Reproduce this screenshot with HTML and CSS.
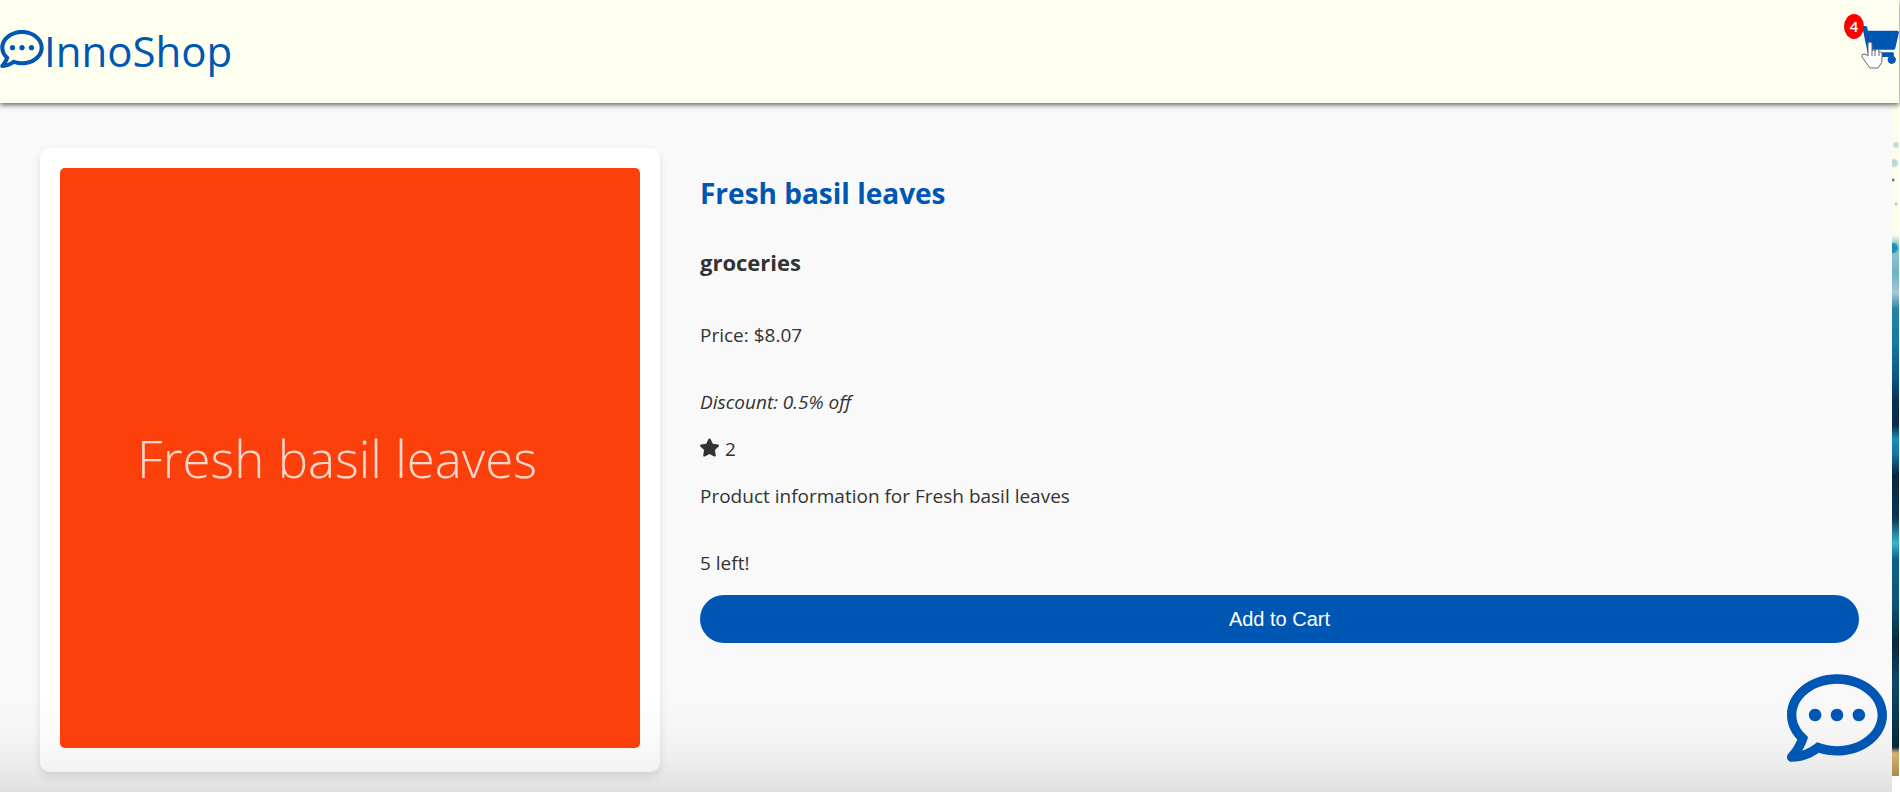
FILE: index.html
```html
<!DOCTYPE html>
<html lang="en">
<head>
    <meta charset="UTF-8">
    <meta name="viewport" content="width=device-width, initial-scale=1.0">
    <title>InnoShop</title>
    <link rel="stylesheet" href="styles.css">
</head>
<body>
    <header class="header">
        <a href="#" class="logo">
            <svg class="logo-icon" viewBox="0 32 512 448" aria-hidden="true">
                <path d="M144 208c-17.700 0-32 14.300-32 32s14.300 32 32 32 32-14.300 32-32-14.300-32-32-32zm112 0c-17.700 0-32 14.300-32 32s14.300 32 32 32 32-14.300 32-32-14.300-32-32-32zm112 0c-17.700 0-32 14.300-32 32s14.300 32 32 32 32-14.300 32-32-14.300-32-32-32zM256 32C114.600 32 0 125.100 0 240c0 47.600 19.900 91.200 52.900 126.300C38 405.700 7 439.100 6.500 439.500c-6.600 7-8.400 17.200-4.600 26S14.400 480 24 480c61.500 0 110-25.700 139.100-46.300C192 442.800 223.200 448 256 448c141.400 0 256-93.100 256-208S397.400 32 256 32zm0 368c-26.700 0-53.100-4.100-78.400-12.100l-22.700-7.200-19.500 13.800c-14.300 10.100-33.900 21.400-57.500 29 7.300-12.100 14.400-25.700 19.900-40.200l10.600-28.100-20.600-21.800C69.700 314.100 48 282.200 48 240c0-88.200 93.300-160 208-160s208 71.800 208 160-93.300 160-208 160z"/>
            </svg>
            <span>InnoShop</span>
        </a>
        <a href="#" class="cart" aria-label="Cart, 4 items">
            <svg class="cart-icon" viewBox="0 0 576 512" aria-hidden="true">
                <path d="M528.120 301.319l47.273-208C578.806 78.301 567.391 64 551.990 64H159.208l-9.166-44.810C147.758 8.021 137.930 0 126.529 0H24C10.745 0 0 10.745 0 24v16c0 13.255 10.745 24 24 24h69.883l70.248 343.435C147.325 417.100 136 435.222 136 456c0 30.928 25.072 56 56 56s56-25.072 56-56c0-15.674-6.447-29.835-16.824-40h209.647C430.447 426.165 424 440.326 424 456c0 30.928 25.072 56 56 56s56-25.072 56-56c0-22.172-12.888-41.332-31.579-50.405l5.517-24.276c3.413-15.018-8.002-29.319-23.403-29.319H218.117l-6.545-32h293.145c11.206 0 20.920-7.754 23.403-18.681z"/>
            </svg>
            <span class="cart-count">4</span>
            <svg class="pointer" viewBox="0 0 22 28" aria-hidden="true">
                <path d="M7 15V3a2 2 0 0 1 4 0v7a2 2 0 0 1 3 0 2 2 0 0 1 4 1 2 2 0 0 1 3 2v6q0 3-2 5l-2 3H9l-3-4-5-7q-1-3 2-3 2 0 4 2z"/>
                <path d="M11 10v5M14 10v5M18 11v4"/>
            </svg>
        </a>
    </header>

    <div class="page">
        <main class="product">
            <div class="product-card">
                <div class="product-image">Fresh basil leaves</div>
            </div>
            <div class="product-details">
                <h1>Fresh basil leaves</h1>
                <h2>groceries</h2>
                <p>Price: $8.07</p>
                <p class="discount">Discount: 0.5% off</p>
                <div class="rating">
                    <svg class="star" viewBox="20 0 536 512" aria-hidden="true">
                        <path d="M259.300 17.800L194 150.200 47.900 171.500c-26.200 3.800-36.700 36.100-17.700 54.600l105.700 103-25 145.500c-4.500 26.300 23.200 46 46.400 33.700L288 439.600l130.700 68.700c23.200 12.200 50.900-7.400 46.400-33.700l-25-145.500 105.700-103c19-18.500 8.500-50.800-17.700-54.600L382 150.200 316.700 17.800c-11.700-23.600-45.600-23.900-57.400 0z"/>
                    </svg>
                    <span>2</span>
                </div>
                <p>Product information for Fresh basil leaves</p>
                <p class="stock">5 left!</p>
                <button type="button" class="add-to-cart">Add to Cart</button>
            </div>
        </main>
        <div class="backdrop"></div>
    </div>

    <button type="button" class="chat" aria-label="Open chat">
        <svg viewBox="0 32 512 448" aria-hidden="true">
            <path d="M144 208c-17.700 0-32 14.300-32 32s14.300 32 32 32 32-14.300 32-32-14.300-32-32-32zm112 0c-17.700 0-32 14.300-32 32s14.300 32 32 32 32-14.300 32-32-14.300-32-32-32zm112 0c-17.700 0-32 14.300-32 32s14.300 32 32 32 32-14.300 32-32-14.300-32-32-32zM256 32C114.600 32 0 125.100 0 240c0 47.600 19.900 91.200 52.900 126.300C38 405.700 7 439.100 6.500 439.500c-6.600 7-8.400 17.200-4.600 26S14.400 480 24 480c61.500 0 110-25.700 139.100-46.300C192 442.800 223.200 448 256 448c141.400 0 256-93.100 256-208S397.400 32 256 32zm0 368c-26.700 0-53.100-4.100-78.400-12.100l-22.700-7.200-19.500 13.800c-14.300 10.100-33.900 21.400-57.500 29 7.300-12.100 14.400-25.700 19.900-40.200l10.600-28.100-20.600-21.800C69.700 314.100 48 282.200 48 240c0-88.200 93.300-160 208-160s208 71.800 208 160-93.300 160-208 160z"/>
        </svg>
    </button>
</body>
</html>
```
FILE: styles.css
```css
* {
    box-sizing: border-box;
}
body {
    font-family: "Segoe UI", "Open Sans", "Noto Sans", sans-serif;
    margin: 0;
    min-height: 100vh;
    display: flex;
    flex-direction: column;
    background-color: #fff;
    color: #333;
}
.header {
    position: relative;
    z-index: 1;
    display: flex;
    justify-content: space-between;
    align-items: center;
    height: 103px;
    margin-right: 1px;
    background-color: #fffff0;
    box-shadow: 0 2px 5px rgba(0, 0, 0, 0.6);
}
.logo {
    display: flex;
    align-items: center;
    margin-bottom: 2px;
    color: #0056b3;
    font-size: 42px;
    text-decoration: none;
}
.logo-icon {
    width: 44px;
    height: 38px;
    margin-bottom: 4px;
    fill: #0056b3;
}
.cart {
    position: relative;
    display: flex;
    margin-bottom: 13px;
}
.cart-icon {
    width: 43px;
    height: 38px;
    fill: #0056b3;
}
.cart-count {
    position: absolute;
    top: -12px;
    left: -12px;
    width: 20px;
    height: 25px;
    border-radius: 50%;
    background-color: #f00;
    color: #fff;
    font-size: 15px;
    font-weight: 600;
    line-height: 25px;
    text-align: center;
}
.pointer {
    position: absolute;
    top: 15px;
    left: 5px;
    width: 22px;
    height: 28px;
    fill: #fff;
    stroke: #667;
    stroke-width: 1;
    overflow: visible;
}
.page {
    flex: 1;
    display: flex;
}
.product {
    flex: 1;
    display: grid;
    grid-template-columns: 620px 1fr;
    align-items: start;
    gap: 40px;
    padding: 45px 33px 20px 40px;
    background: linear-gradient(to top, #e0e0e0, #ededed 30px, #f6f6f6 65px, #f9f9f9 100px);
}
.product-card {
    padding: 20px 20px 24px;
    border-radius: 10px;
    background: linear-gradient(to top, #f2f2f2, #fbfbfb 35px, #fff 80px);
    box-shadow: 0 4px 10px rgba(0, 0, 0, 0.1);
}
.product-image {
    display: flex;
    align-items: center;
    justify-content: center;
    aspect-ratio: 1;
    padding-right: 26px;
    border-radius: 5px;
    background-color: #fc400b;
    color: #ffd8cc;
    font-family: "Open Sans", sans-serif;
    font-size: 51px;
    font-weight: 300;
}
.product-details {
    display: flex;
    flex-direction: column;
    padding-top: 25px;
    font-size: 19px;
    line-height: 27px;
}
h1 {
    margin: 0 0 34px;
    color: #0056b3;
    font-size: 28px;
    line-height: 40px;
}
h2 {
    margin: 0 0 45px;
    font-size: 22px;
    line-height: 30px;
}
p {
    margin: 0 0 40px;
}
.discount {
    margin-bottom: 20px;
    font-style: italic;
}
.rating {
    display: flex;
    align-items: center;
    gap: 6px;
    margin-bottom: 20px;
}
.star {
    width: 19px;
    height: 19px;
    margin-bottom: 4px;
    fill: #333;
}
.stock {
    margin-bottom: 18px;
}
.add-to-cart {
    height: 48px;
    border: none;
    border-radius: 24px;
    background-color: #0056b3;
    color: #fff;
    font-family: Arial, "Liberation Sans", sans-serif;
    font-size: 20px;
    cursor: pointer;
}
.add-to-cart:hover {
    background-color: #004494;
}
/* strip of the page's artwork behind the product panel */
.backdrop {
    width: 7px;
    margin: 0 1px 16px 0;
    background:
        radial-gradient(circle at 2px 60px, #b9dbd6 3px, transparent 5px),
        radial-gradient(circle at 4px 42px, #c4dfd9 2px, transparent 4px),
        radial-gradient(circle at 1px 77px, #777 1px, transparent 2px),
        radial-gradient(circle at 4px 101px, #b7c6ba 1px, transparent 2px),
        radial-gradient(circle at 1px 145px, #1a91b3 4px, transparent 6px),
        linear-gradient(#fdfdec 0 132px, #9fcbd1 140px, #6fb2c6 170px, #a5c9d6 190px, #2585a7 206px, #1678a1 240px, #0d5583 275px, #08304f 300px, #0a2c48 322px, #1a8eb5 336px, #17799f 350px, #06263e 372px, #0b3555 415px, #38b4cd 440px, #0d6389 456px, #0e5577 500px, #06283e 540px, #0c4a68 580px, #06283c 644px, #d3b273 650px, #ad8a50 673px);
}
.chat {
    position: fixed;
    right: 13px;
    bottom: 30px;
    padding: 0;
    border: none;
    background: none;
    cursor: pointer;
}
.chat svg {
    display: block;
    width: 100px;
    height: 88px;
    fill: #0056b3;
}
```
